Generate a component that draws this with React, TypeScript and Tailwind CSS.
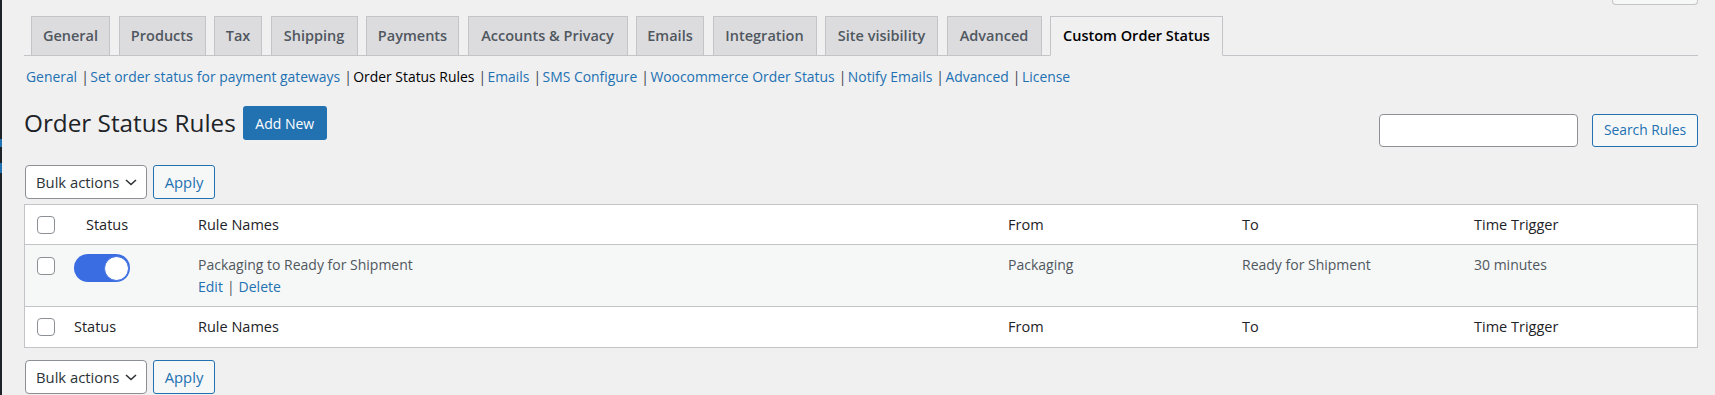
import React from "react";

const tabs = [
	{ label: "General", w: "w-[79px]" },
	{ label: "Products", w: "w-[87px]" },
	{ label: "Tax", w: "w-[48px]" },
	{ label: "Shipping", w: "w-[87px]" },
	{ label: "Payments", w: "w-[93px]" },
	{ label: "Accounts & Privacy", w: "w-[160px]" },
	{ label: "Emails", w: "w-[68px]" },
	{ label: "Integration", w: "w-[104px]" },
	{ label: "Site visibility", w: "w-[113px]" },
	{ label: "Advanced", w: "w-[95px]" },
	{ label: "Custom Order Status", w: "w-[173px]", active: true },
];

const subLinks = [
	"General",
	"Set order status for payment gateways",
	"Order Status Rules",
	"Emails",
	"SMS Configure",
	"Woocommerce Order Status",
	"Notify Emails",
	"Advanced",
	"License",
];

function Checkbox() {
	return (
		<div className="w-[18px] h-[18px] rounded-[4px] border border-[#8c8f94] bg-white shrink-0"></div>
	);
}

function BulkActions() {
	return (
		<div className="flex items-center ml-[1px]">
			<div className="w-[122px] h-[34px] rounded-[4px] border border-[#8c8f94] bg-white flex items-center justify-between pl-[10px] pr-[9px] text-[14.8px] text-[#2c3338]">
				<span>Bulk actions</span>
				<svg width="12" height="7" viewBox="0 0 12 7" fill="none">
					<path d="M1 1l5 4.5L11 1" stroke="#2c3338" strokeWidth="1.6" />
				</svg>
			</div>
			<button className="ml-[6px] w-[62px] h-[34px] rounded-[3px] border border-[#2271b1] bg-[#f6f7f7] text-[#2271b1] text-[14.8px]">
				Apply
			</button>
		</div>
	);
}

function Toggle() {
	return (
		<div className="w-[56px] h-[28px] rounded-full bg-[#3b6de2] flex items-center justify-end pr-[1px]">
			<div className="w-[25px] h-[25px] rounded-full bg-white border border-[#3b6de2]"></div>
		</div>
	);
}

export default function App() {
	const cols = "grid grid-cols-[49px_124px_810px_234px_232px_1fr] items-center";

	return (
		<div className="min-h-screen w-[1715px] bg-[#f0f0f1] flex font-['Open_Sans',sans-serif] overflow-hidden">
			<div className="w-[2px] shrink-0 flex flex-col">
				<div className="h-[139px] bg-[#1d2327]"></div>
				<div className="h-[8px] bg-[#2271b1]"></div>
				<div className="h-[16px] bg-[#1d2327]"></div>
				<div className="h-[10px] bg-[#2271b1]"></div>
				<div className="flex-1 bg-[#1d2327]"></div>
			</div>

			<div className="flex-1 pl-[22px] pr-[17px]">
				<div className="h-[16px] flex justify-end items-start">
					<div className="w-[86px] h-[5px] border-x border-b border-[#c3c4c7] rounded-b-[4px] bg-[#f6f7f7]"></div>
				</div>

				{/* tabs */}
				<div className="flex items-end gap-[8.5px] pl-[7px] border-b border-[#c3c4c7] h-[40px]">
					{tabs.map((tab) => (
						<div
							key={tab.label}
							className={`${tab.w} h-[40px] -mb-px border border-[#c3c4c7] flex items-center justify-center text-[14.5px] font-semibold ${
								tab.active
									? "bg-[#f0f0f1] border-b-[#f0f0f1] text-black"
									: "bg-[#dcdcde] text-[#50575e]"
							}`}
						>
							{tab.label}
						</div>
					))}
				</div>

				{/* sub links */}
				<div className="mt-[10px] h-[22px] flex items-center pl-[2px] text-[13.9px]">
					{subLinks.map((link, i) => (
						<div key={link} className="flex items-center">
							{i > 0 && <span className="mr-[1.5px] text-[#3c434a]">|</span>}
							<span
								className={
									link === "Order Status Rules"
										? "text-black"
										: "text-[#2271b1]"
								}
							>
								{link}
							</span>
							{i < subLinks.length - 1 && <span className="w-[4px]"></span>}
						</div>
					))}
				</div>

				{/* heading */}
				<div className="mt-[18px] h-[41px] flex justify-between items-start">
					<div className="flex items-center h-[34px]">
						<h1 className="text-[24.3px] text-[#1d2327] leading-[34px]">
							Order Status Rules
						</h1>
						<button className="ml-[7px] w-[84px] h-[34px] rounded-[3px] bg-[#2271b1] text-white text-[14px]">
							Add New
						</button>
					</div>
					<div className="mt-[8px] flex items-center">
						<div className="w-[199px] h-[33px] rounded-[4px] border border-[#8c8f94] bg-white"></div>
						<button className="ml-[14px] w-[106px] h-[33px] rounded-[3px] border border-[#2271b1] bg-[#f6f7f7] text-[#2271b1] text-[13.8px]">
							Search Rules
						</button>
					</div>
				</div>

				<div className="mt-[18px]">
					<BulkActions />
				</div>

				{/* table */}
				<div className="mt-[5px] border border-[#c3c4c7] bg-white">
					<div className={`${cols} h-[40px] border-b border-[#c3c4c7] text-[14.5px] text-[#1d2327]`}>
						<div className="pl-[12px]">
							<Checkbox />
						</div>
						<div className="pl-[12px]">Status</div>
						<div>Rule Names</div>
						<div>From</div>
						<div>To</div>
						<div>Time Trigger</div>
					</div>

					<div className="grid grid-cols-[49px_124px_810px_234px_232px_1fr] items-start h-[62px] border-b border-[#c3c4c7] bg-[#f6f7f7] text-[14px] text-[#50575e] leading-[22px]">
						<div className="pl-[12px] pt-[12px]">
							<Checkbox />
						</div>
						<div className="pt-[9px]">
							<Toggle />
						</div>
						<div className="pt-[9px]">
							<div>Packaging to Ready for Shipment</div>
							<div>
								<span className="text-[#2271b1]">Edit</span>
								<span className="mx-[4px]">|</span>
								<span className="text-[#2271b1]">Delete</span>
							</div>
						</div>
						<div className="pt-[9px]">Packaging</div>
						<div className="pt-[9px]">Ready for Shipment</div>
						<div className="pt-[9px]">30 minutes</div>
					</div>

					<div className={`${cols} h-[40px] text-[14.5px] text-[#1d2327]`}>
						<div className="pl-[12px]">
							<Checkbox />
						</div>
						<div>Status</div>
						<div>Rule Names</div>
						<div>From</div>
						<div>To</div>
						<div>Time Trigger</div>
					</div>
				</div>

				<div className="mt-[12px]">
					<BulkActions />
				</div>
			</div>
		</div>
	);
}
